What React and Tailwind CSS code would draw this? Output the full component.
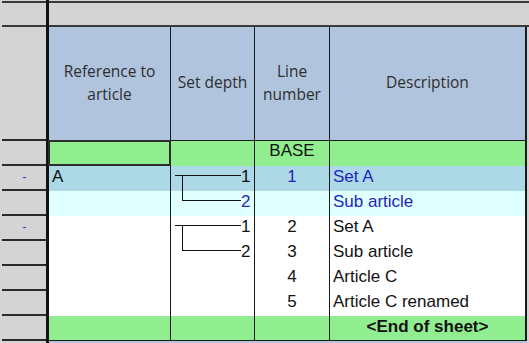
import React from "react";

const HEAD_FONT = { fontFamily: '"Open Sans", "Noto Sans", sans-serif' };
const DATA_FONT = { fontFamily: '"Liberation Sans", Arial, sans-serif' };

function Tree({ part }) {
  return (
    <svg width="70" height="25" className="shrink-0 block" shapeRendering="crispEdges">
      {part === "top" ? (
        <>
          <line x1="4" y1="9.5" x2="70" y2="9.5" stroke="#111" strokeWidth="1" />
          <line x1="11.5" y1="9.5" x2="11.5" y2="25" stroke="#111" strokeWidth="1" />
        </>
      ) : (
        <>
          <line x1="11.5" y1="0" x2="11.5" y2="9.5" stroke="#111" strokeWidth="1" />
          <line x1="11.5" y1="9.5" x2="70" y2="9.5" stroke="#111" strokeWidth="1" />
        </>
      )}
    </svg>
  );
}

const rows = [
  { bg: "bg-[#90ee90]", ref: "", depth: null, line: "BASE", lineBlue: false, desc: "", descBlue: false, base: true },
  { bg: "bg-[#add8e6]", ref: "A", depth: { n: "1", part: "top", blue: false }, line: "1", lineBlue: true, desc: "Set A", descBlue: true, dash: true },
  { bg: "bg-[#e0ffff]", ref: "", depth: { n: "2", part: "bottom", blue: true }, line: "", desc: "Sub article", descBlue: true },
  { bg: "bg-white", ref: "", depth: { n: "1", part: "top" }, line: "2", desc: "Set A", dash: true },
  { bg: "bg-white", ref: "", depth: { n: "2", part: "bottom" }, line: "3", desc: "Sub article" },
  { bg: "bg-white", ref: "", depth: null, line: "4", desc: "Article C" },
  { bg: "bg-white", ref: "", depth: null, line: "5", desc: "Article C renamed" },
  { bg: "bg-[#90ee90]", ref: "", depth: null, line: "", desc: "<End of sheet>", end: true },
];

export default function App() {
  return (
    <div className="w-[529px] h-[343px] bg-[#d4d4d4] flex overflow-hidden select-none">
      {/* gutter */}
      <div className="w-[46px] flex flex-col pl-[2px]">
        <div className="h-[1px]" />
        <div className="h-[26px] border-t-2 border-b-2 border-[#3a3a3a]" />
        <div className="h-[114px] border-b-2 border-[#2a2a2a]" />
        {rows.map((r, i) => (
          <div
            key={i}
            className="h-[25px] border-b-2 border-[#2a2a2a] flex items-center justify-center"
          >
            {r.dash && (
              <span className="text-[13px] leading-none text-[#3b3bc4] pb-[2px] pl-[1px]" style={DATA_FONT}>
                -
              </span>
            )}
          </div>
        ))}
      </div>

      {/* thick divider */}
      <div className="w-[3px] bg-[#111]" />

      {/* main */}
      <div className="flex-1 flex flex-col">
        <div className="h-[1px]" />
        <div className="h-[26px] border-t-2 border-b-2 border-[#3a3a3a]" />
        {/* header */}
        <div
          className="h-[114px] flex text-[15.5px] leading-[22.5px] text-[#2e2e2e] text-center"
          style={HEAD_FONT}
        >
          <div className="w-[122px] bg-[#b0c4de] border-r border-b border-[#1a1a1a] flex items-center justify-center pb-[2px]">
            Reference to
            <br />
            article
          </div>
          <div className="w-[84px] bg-[#b0c4de] border-r border-b border-[#1a1a1a] flex items-center justify-center pb-[2px]">
            Set depth
          </div>
          <div className="w-[75px] bg-[#b0c4de] border-r border-b border-[#1a1a1a] flex items-center justify-center pb-[2px]">
            Line
            <br />
            number
          </div>
          <div className="w-[197px] bg-[#b0c4de] border-r-2 border-b border-[#1a1a1a] flex items-center justify-center pb-[2px]">
            Description
          </div>
        </div>

        {/* data rows */}
        {rows.map((r, i) => (
          <div
            key={i}
            className="h-[25px] flex text-[17px] leading-[19px] text-[#111]"
            style={DATA_FONT}
          >
            <div className={`relative w-[122px] ${r.bg} border-r border-[#1a1a1a] pl-[3px] pt-[1px]`}>
              {r.ref}
              {r.base && (
                <div className="absolute -left-[1px] -top-[1px] -right-[1px] bottom-0 border-2 border-[#2d2d2d]" />
              )}
            </div>
            <div className={`w-[84px] ${r.bg} border-r border-[#1a1a1a] flex`}>
              {r.depth && (
                <>
                  <Tree part={r.depth.part} />
                  <span
                    className={`flex-1 text-right pr-[4px] pt-[1px] ${r.depth.blue ? "text-[#2424bc]" : ""}`}
                  >
                    {r.depth.n}
                  </span>
                </>
              )}
            </div>
            <div
              className={`w-[75px] ${r.bg} border-r border-[#1a1a1a] text-center ${r.base ? "pt-0" : "pt-[1px]"} ${r.lineBlue ? "text-[#2424bc]" : ""}`}
            >
              {r.line}
            </div>
            <div
              className={`w-[197px] ${r.bg} border-r-2 border-[#1a1a1a] ${r.end ? "text-center font-bold" : "pl-[3px]"} pt-[1px] ${r.descBlue ? "text-[#2424bc]" : ""}`}
            >
              {r.desc}
            </div>
          </div>
        ))}
        <div className="w-[478px] h-[1px] bg-[#1a1a1a] -mt-[1px] relative" />
        <div className="w-[478px] flex-1 bg-[#b4c6dc]" />
      </div>
    </div>
  );
}
